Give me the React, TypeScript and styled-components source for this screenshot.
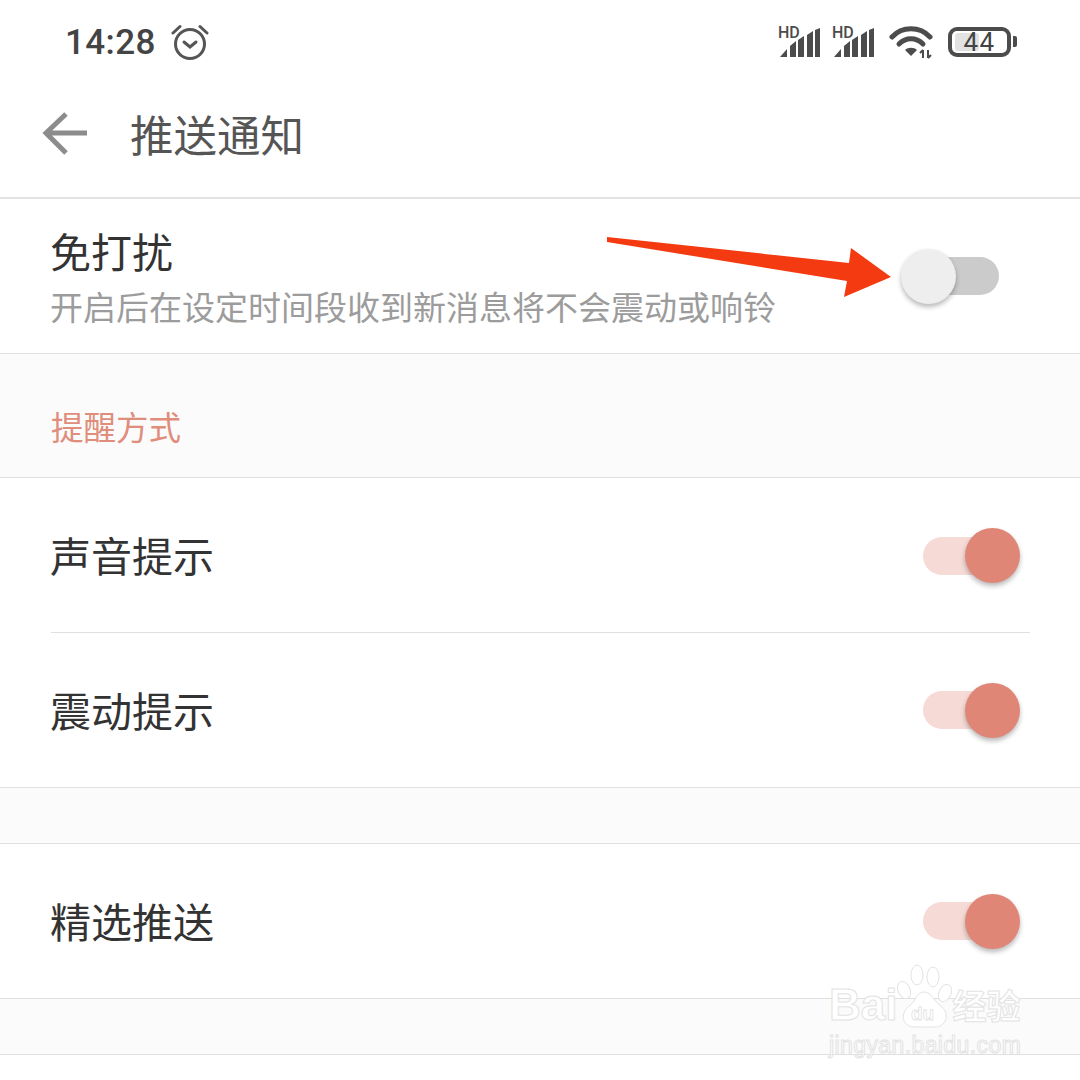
import React from 'react';
import styled, { createGlobalStyle } from 'styled-components';

const GlobalStyle = createGlobalStyle`
    html, body {
        margin: 0;
        padding: 0;
        background: #ffffff;
        font-family: 'Noto Sans CJK SC', 'Noto Sans', sans-serif;
    }
`;

const Page = styled.div`
    position: relative;
    width: 1080px;
    height: 1080px;
    overflow: hidden;
    background: #ffffff;
`;

const StatusBar = styled.div`
    height: 84px;
    display: flex;
    align-items: center;
    padding: 0 69px 0 65px;
    box-sizing: border-box;
`;

const Time = styled.span`
    font-family: Roboto, sans-serif;
    font-weight: 500;
    font-size: 35px;
    letter-spacing: 0.4px;
    color: #444444;
    margin-right: 15px;
`;

const StatusRight = styled.div`
    margin-left: auto;
    display: flex;
    align-items: center;
    gap: 11px;
`;

const SignalIcon = styled.svg`
    width: 43px;
    height: 38px;
    margin-top: -6px;
`;

const WifiIcon = styled.svg`
    width: 46px;
    height: 34px;
    margin: 0 -1px 0 3px;
`;

const Battery = styled.div`
    position: relative;
    width: 63px;
    height: 30px;
    margin-left: 3px;
    box-sizing: border-box;
    border: 4px solid #4c4c4c;
    border-radius: 9px;
    display: flex;
    align-items: center;
    justify-content: center;
    font-family: Roboto, sans-serif;
    font-size: 26px;
    letter-spacing: 1.5px;
    color: #444444;

    &::before {
        content: '';
        position: absolute;
        left: 3px;
        top: 2px;
        bottom: 2px;
        width: 24px;
        background: #e2e2e2;
        border-radius: 3px;
    }

    &::after {
        content: '';
        position: absolute;
        right: -10px;
        top: 5px;
        width: 4px;
        height: 11px;
        background: #4c4c4c;
        border-radius: 0 2px 2px 0;
    }
`;

const BatteryLevel = styled.span`
    position: relative;
`;

const Header = styled.div`
    height: 115px;
    display: flex;
    align-items: center;
    padding: 0 0 15px 42px;
    box-sizing: border-box;
    border-bottom: 2px solid #e2e2e2;
`;

const BackIcon = styled.svg`
    width: 46px;
    height: 46px;
    margin-right: 42px;
`;

const Title = styled.h1`
    margin: 0;
    font-size: 43.5px;
    font-weight: 400;
    color: #555555;
`;

const Row = styled.div<{ $divider?: 'full' | 'inset' }>`
    position: relative;
    height: 155px;
    box-sizing: border-box;
    display: flex;
    align-items: center;
    justify-content: space-between;
    padding: 0 81px 0 50px;
    border-bottom: ${(p) => (p.$divider === 'full' ? '1px solid #e0e0e0' : 'none')};

    ${(p) =>
        p.$divider === 'inset' &&
        `&::after {
            content: '';
            position: absolute;
            left: 51px;
            right: 50px;
            bottom: 0;
            height: 1px;
            background: #e0e0e0;
        }`}
`;

const RowText = styled.div`
    display: flex;
    flex-direction: column;
`;

const RowTitle = styled.div`
    font-size: 41px;
    line-height: 56px;
    padding-bottom: 3px;
    color: #333333;
`;

const RowSub = styled.div`
    font-size: 33px;
    line-height: 50px;
    color: #9c9c9c;
`;

const Section = styled.div<{ $height: number }>`
    height: ${(p) => p.$height}px;
    box-sizing: border-box;
    background: #fbfbfb;
    border-bottom: 1px solid #e0e0e0;
    padding: 47px 0 0 51px;
`;

const SectionLabel = styled.div`
    font-size: 32.5px;
    line-height: 50px;
    color: #e08d7b;
`;

const Track = styled.div<{ $on: boolean }>`
    position: relative;
    width: 76px;
    height: 38px;
    border-radius: 19px;
    background: ${(p) => (p.$on ? '#f6dad5' : '#cbcbcb')};
`;

const Knob = styled.div<{ $on: boolean }>`
    position: absolute;
    top: -8.5px;
    width: 55px;
    height: 55px;
    border-radius: 50%;
    ${(p) => (p.$on ? 'right: -21px;' : 'left: -22px;')}
    background: ${(p) => (p.$on ? '#e08676' : '#eeeeee')};
    box-shadow: 0 3px 5px rgba(0, 0, 0, 0.28);
`;

const Arrow = styled.svg`
    position: absolute;
    left: 600px;
    top: 230px;
    width: 300px;
    height: 75px;
`;

const Watermark = styled.div`
    position: absolute;
    left: 829px;
    top: 962px;
    width: 200px;
    color: #ffffff;
    -webkit-text-stroke: 1px #e3e3e3;
    font-family: 'Liberation Sans', sans-serif;
`;

const WatermarkTop = styled.div`
    display: flex;
    align-items: flex-end;
    height: 68px;
`;

const WatermarkBai = styled.span`
    font-size: 44px;
    font-weight: 700;
    line-height: 50px;
`;

const WatermarkPaw = styled.svg`
    width: 56px;
    height: 68px;
    flex: none;
    margin-left: -1px;
`;

const WatermarkCn = styled.span`
    font-family: 'Noto Sans CJK SC', sans-serif;
    font-size: 34px;
    font-weight: 700;
    line-height: 50px;
    white-space: nowrap;
`;

const WatermarkUrl = styled.div`
    font-size: 23px;
    line-height: 26px;
    margin-top: 2px;
    letter-spacing: 0.4px;
    white-space: nowrap;
`;

const Toggle: React.FC<{ on: boolean }> = ({ on }) => (
    <Track $on={on}>
        <Knob $on={on} />
    </Track>
);

const Signal: React.FC = () => (
    <SignalIcon viewBox="0 -6 43 38">
        <g fill="#4c4c4c">
            <path d="M2 31 L9 23 V31 Z" />
            <path d="M12 20 L18 15 V31 H12 Z" />
            <path d="M20 14 L26 10 V31 H20 Z" />
            <path d="M29 9 L35 5 V31 H29 Z" />
            <path d="M37 4 L42 2 V31 H37 Z" />
        </g>
        <text x="0" y="12" fontFamily="Roboto, sans-serif" fontWeight="500" fontSize="16" fill="#4c4c4c">
            HD
        </text>
    </SignalIcon>
);

const Wifi: React.FC = () => (
    <WifiIcon viewBox="0 0 46 34">
        <g fill="none" stroke="#4c4c4c" strokeWidth="5" strokeLinecap="round">
            <path d="M3 12 C13 1 31 1 41 12" />
            <path d="M10 19 C17 12 27 12 34 19" />
        </g>
        <path d="M16 25 C19 22 25 22 28 25 L22 31 Z" fill="#4c4c4c" />
        <g stroke="#4c4c4c" strokeWidth="2" fill="none">
            <path d="M34 25 V33 M31 28 L34 25" />
            <path d="M39 25 V33 M39 33 L42 30" />
        </g>
    </WifiIcon>
);

export default function App() {
    return (
        <Page>
            <GlobalStyle />
            <StatusBar>
                <Time>14:28</Time>
                <svg width="38" height="38" viewBox="0 0 38 38">
                    <g fill="none" stroke="#555555" strokeWidth="3">
                        <circle cx="19" cy="21" r="14.5" />
                        <path d="M13 19 L19 24 L25 19" strokeLinecap="round" />
                        <path d="M2 10 L9 3.5 M36 10 L29 3.5" strokeLinecap="round" />
                    </g>
                </svg>
                <StatusRight>
                    <Signal />
                    <Signal />
                    <Wifi />
                    <Battery>
                        <BatteryLevel>44</BatteryLevel>
                    </Battery>
                </StatusRight>
            </StatusBar>
            <Header>
                <BackIcon viewBox="0 0 46 46">
                    <path d="M45 23 H5 M24 4 L4 23 L24 43" fill="none" stroke="#8c8c8c" strokeWidth="5" />
                </BackIcon>
                <Title>推送通知</Title>
            </Header>
            <Row $divider="full">
                <RowText>
                    <RowTitle>免打扰</RowTitle>
                    <RowSub>开启后在设定时间段收到新消息将不会震动或响铃</RowSub>
                </RowText>
                <Toggle on={false} />
            </Row>
            <Section $height={124}>
                <SectionLabel>提醒方式</SectionLabel>
            </Section>
            <Row $divider="inset">
                <RowTitle>声音提示</RowTitle>
                <Toggle on />
            </Row>
            <Row $divider="full">
                <RowTitle>震动提示</RowTitle>
                <Toggle on />
            </Row>
            <Section $height={56} />
            <Row $divider="full">
                <RowTitle>精选推送</RowTitle>
                <Toggle on />
            </Row>
            <Section $height={56} />
            <Arrow viewBox="0 0 300 75">
                <polygon points="7,7 7,12 247,51 244,67 291,47 251,18 249,33" fill="#f43a10" />
            </Arrow>
            <Watermark>
                <WatermarkTop>
                    <WatermarkBai>Bai</WatermarkBai>
                    <WatermarkPaw viewBox="0 0 56 68">
                        <g fill="#ffffff" stroke="#e3e3e3" strokeWidth="1">
                            <ellipse cx="8" cy="28" rx="6" ry="9" transform="rotate(-25 8 28)" />
                            <ellipse cx="21" cy="13" rx="6" ry="10" />
                            <ellipse cx="37" cy="15" rx="6" ry="10" />
                            <ellipse cx="49" cy="31" rx="6" ry="9" transform="rotate(25 49 31)" />
                            <path d="M28 30 C36 30 38 40 46 45 C54 52 50 66 38 65 L20 65 C6 66 4 52 12 45 C20 40 20 30 28 30 Z" />
                        </g>
                        <text x="15" y="58" fontSize="19" fontWeight="700" fontFamily="Liberation Sans, sans-serif" fill="#ffffff" stroke="#e3e3e3" strokeWidth="0.8">
                            du
                        </text>
                    </WatermarkPaw>
                    <WatermarkCn>经验</WatermarkCn>
                </WatermarkTop>
                <WatermarkUrl>jingyan.baidu.com</WatermarkUrl>
            </Watermark>
        </Page>
    );
}
